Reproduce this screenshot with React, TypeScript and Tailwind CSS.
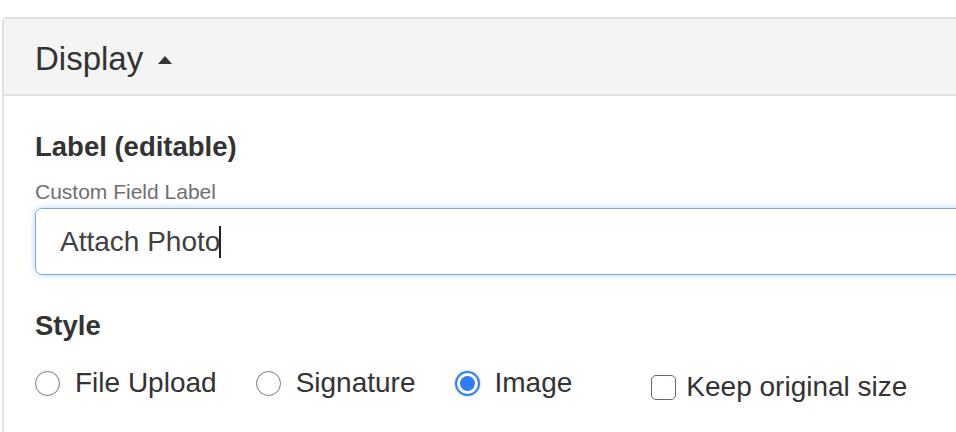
import { useState } from "react";

const STYLES = ["File Upload", "Signature", "Image"] as const;

export default function App() {
  const [style, setStyle] = useState<string>("Image");
  const [keepSize, setKeepSize] = useState(false);

  return (
    <div className="w-[956px] h-[432px] overflow-hidden bg-white text-[#333] font-['Liberation_Sans',Arial,sans-serif]">
      <div className="mt-[17px] ml-[2px] w-[1100px] border-2 border-r-0 border-b-0 border-[#e0e0e0] rounded-tl-[5px]">
        {/* Header */}
        <div className="h-[77px] bg-[#f4f4f4] border-b-2 border-[#e2e2e2] flex items-center pl-[31px] pt-[5px]">
          <span className="text-[33px] leading-[36px]">Display</span>
          <svg width="14" height="8" viewBox="0 0 14 8" className="ml-[15px] mt-[1px]">
            <path d="M0 8 L7 0 L14 8 Z" fill="#333" />
          </svg>
        </div>

        {/* Body */}
        <div className="pl-[31px] pt-[35px] pb-10">
          <div className="text-[27.5px] leading-[32px] font-bold">Label (editable)</div>
          <div className="mt-[17px] text-[21px] leading-[24px] text-[#6f6f6f]">Custom Field Label</div>
          <div className="mt-[4px] h-[67px] border border-[#7da9d8] rounded-[7px] shadow-[0_0_6px_rgba(102,175,233,0.5)] flex items-center pl-6">
            <span className="text-[28px] leading-[32px] text-[#404040]">Attach Photo</span>
            <span className="w-[2px] h-[32px] bg-[#222] ml-[-1px]" />
          </div>

          <div className="mt-[35px] text-[27.5px] leading-[32px] font-bold">Style</div>

          <div className="mt-[25px] flex items-start">
            {STYLES.map((s) => (
              <label
                key={s}
                onClick={() => setStyle(s)}
                className="flex items-center gap-[15px] mr-[39px] cursor-pointer"
              >
                {style === s ? (
                  <span className="w-[25px] h-[25px] rounded-full border-2 border-[#2f7cf6] shadow-[0_0_2px_rgba(47,124,246,0.6)] flex items-center justify-center">
                    <span className="w-[15px] h-[15px] rounded-full bg-[#2f7cf6]" />
                  </span>
                ) : (
                  <span className="w-[25px] h-[25px] rounded-full border-[1.5px] border-[#777]" />
                )}
                <span className="text-[28px] leading-[32px]">{s}</span>
              </label>
            ))}
            <label
              onClick={() => setKeepSize(!keepSize)}
              className="ml-[40px] mt-[4px] flex items-center gap-[10px] cursor-pointer"
            >
              <span
                className={`w-[25px] h-[25px] rounded-[5px] border-[1.5px] ${
                  keepSize ? "bg-[#2f7cf6] border-[#2f7cf6]" : "border-[#666]"
                }`}
              />
              <span className="text-[28px] leading-[32px]">Keep original size</span>
            </label>
          </div>
        </div>
      </div>
    </div>
  );
}
